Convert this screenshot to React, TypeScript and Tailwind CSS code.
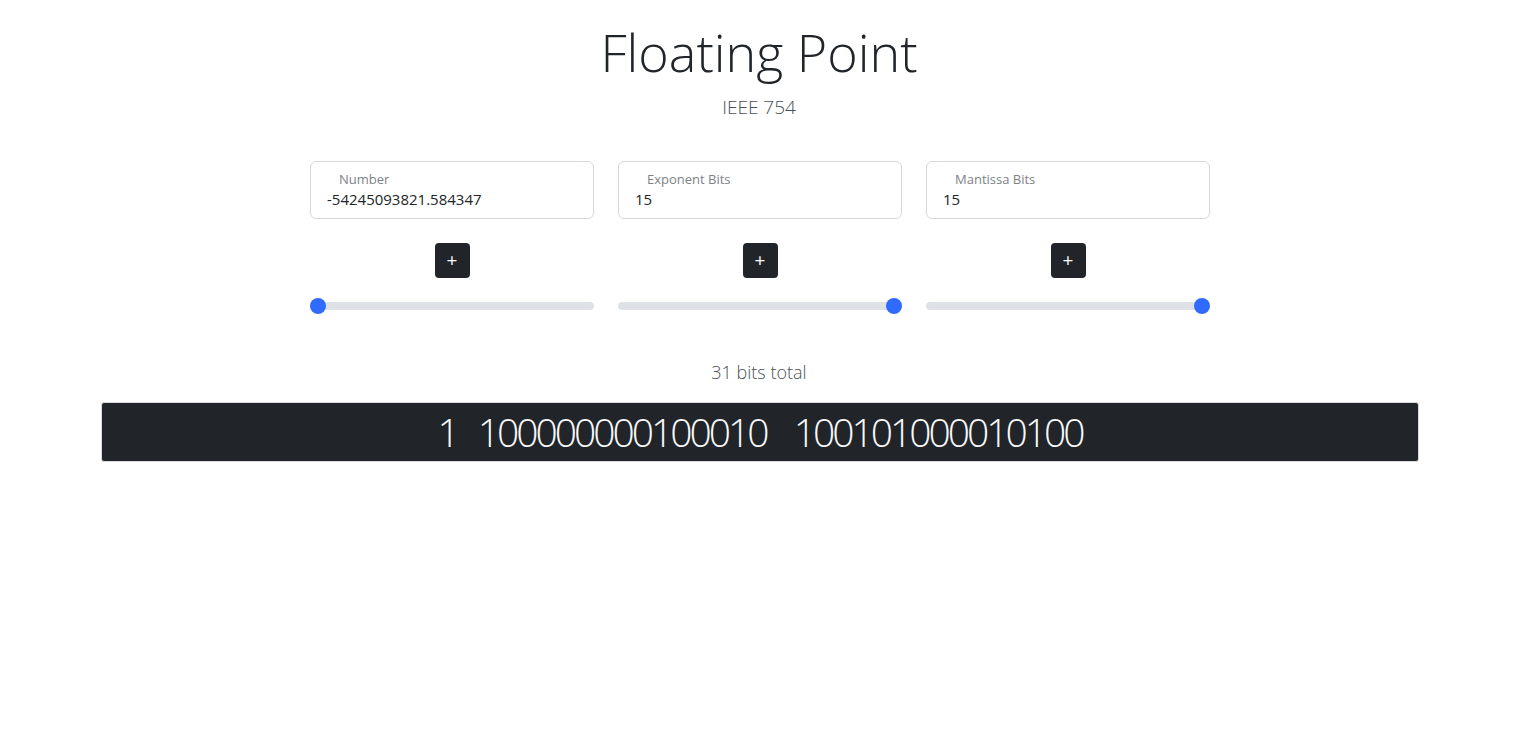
import * as Slider from '@radix-ui/react-slider';

type Field = { label: string; value: string; pos: number };

const fields: Field[] = [
  { label: 'Number', value: '-54245093821.584347', pos: 0 },
  { label: 'Exponent Bits', value: '15', pos: 100 },
  { label: 'Mantissa Bits', value: '15', pos: 100 },
];

function FieldColumn({ field }: { field: Field }) {
  return (
    <div className="flex flex-col items-center">
      <label className="relative block h-[58px] w-full rounded-[6px] border border-[#d4d8dc] bg-white">
        <span className="absolute left-[28px] top-[8px] text-[13px] leading-[18px] text-[#7d8287]">
          {field.label}
        </span>
        <input
          className="absolute inset-x-0 top-[26px] bg-transparent px-[16px] text-[15px] leading-[22px] text-[#212529] outline-none"
          defaultValue={field.value}
        />
      </label>
      <button className="mt-6 flex h-[35px] w-[35px] items-center justify-center rounded-[4px] bg-[#212529] text-[19px] font-medium leading-none text-white">
        +
      </button>
      <Slider.Root
        className="relative mt-5 flex h-4 w-full items-center"
        defaultValue={[field.pos]}
        max={100}
        step={1}
      >
        <Slider.Track className="relative h-2 w-full grow rounded-full bg-[#dee2e6]">
          <Slider.Range className="absolute h-full bg-transparent" />
        </Slider.Track>
        <Slider.Thumb className="block h-4 w-4 rounded-full bg-[#306bfd] outline-none" />
      </Slider.Root>
    </div>
  );
}

export default function App() {
  return (
    <div className="min-h-screen bg-white font-['Open_Sans',sans-serif] text-[#212529]">
      <div className="pt-[21px] text-center">
        <h1 className="text-[52px] font-light leading-[62px]">Floating Point</h1>
        <p className="mt-[9px] text-[19px] font-light leading-[30px] text-[#495057]">IEEE 754</p>
      </div>

      <div className="mx-auto mt-[39px] w-[902px] pl-[2px]">
        <div className="grid grid-cols-3 gap-6">
          {fields.map((f) => (
            <FieldColumn key={f.label} field={f} />
          ))}
        </div>
      </div>

      <p className="mt-[45px] text-center text-[18px] font-light leading-[27px] text-[#495057]">
        31 bits total
      </p>

      <div className="mx-auto mt-[16px] w-[1320px] pl-[2px]">
        <div className="flex h-[60px] items-center justify-center rounded-[3px] border border-[#d8dadd] bg-[#212529] text-[39px] font-light tracking-[-3px] text-[#f8f9fa]">
          <span>1</span>
          <span className="ml-[21px]">100000000100010</span>
          <span className="ml-[27px]">100101000010100</span>
        </div>
      </div>
    </div>
  );
}
